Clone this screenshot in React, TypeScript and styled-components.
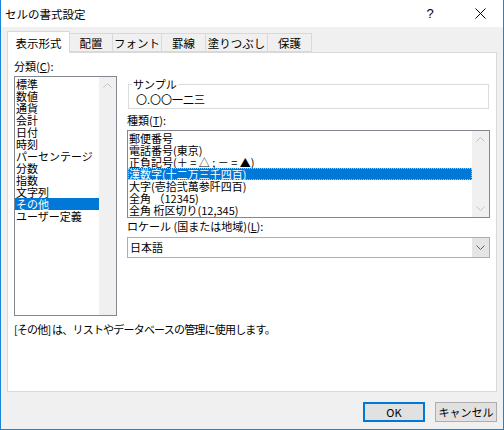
import styled, { createGlobalStyle } from "styled-components";

const GlobalStyle = createGlobalStyle`
  html, body {
    margin: 0;
    padding: 0;
    background: #f0f0f0;
  }
  body {
    font-family: "Noto Sans CJK JP", "Noto Sans", sans-serif;
    font-size: 11px;
    color: #000;
  }
`;

const tabs = ["表示形式", "配置", "フォント", "罫線", "塗りつぶし", "保護"];
const tabWidths = [63, 43, 49, 44, 62, 44];

const categories = [
  "標準",
  "数値",
  "通貨",
  "会計",
  "日付",
  "時刻",
  "パーセンテージ",
  "分数",
  "指数",
  "文字列",
  "その他",
  "ユーザー定義",
];

const types = [
  "郵便番号",
  "電話番号(東京)",
  "正負記号(＋ = △ ; － = ▲)",
  "漢数字(十二万三千四百)",
  "大字(壱拾弐萬参阡四百)",
  "全角 （12345)",
  "全角 桁区切り(12,345)",
];

const Chevron = ({ down, color = "#c2c2c2" }: { down?: boolean; color?: string }) => (
  <svg width="9" height="5" viewBox="0 0 9 5">
    <path
      d={down ? "M0.5 0.5 L4.5 4.5 L8.5 0.5" : "M0.5 4.5 L4.5 0.5 L8.5 4.5"}
      fill="none"
      stroke={color}
      strokeWidth="1"
    />
  </svg>
);

export default function App() {
  return (
    <>
      <GlobalStyle />
      <Window>
        <TitleBar>
          <Title>セルの書式設定</Title>
          <TitleButtons>
            <HelpMark>?</HelpMark>
            <CloseMark>
              <svg width="11" height="11" viewBox="0 0 11 11">
                <path d="M0.5 0.5 L10.5 10.5 M10.5 0.5 L0.5 10.5" stroke="#000" strokeWidth="1" />
              </svg>
            </CloseMark>
          </TitleButtons>
        </TitleBar>

        <Body>
          <TabRow>
            {tabs.map((t, i) => (
              <Tab key={t} $active={i === 0} style={{ width: tabWidths[i] }}>
                {t}
              </Tab>
            ))}
          </TabRow>

          <Panel>
            <Columns>
              <LeftCol>
                <Label>
                  分類(<u>C</u>):
                </Label>
                <CategoryList>
                  <ListItems>
                    {categories.map((c) => (
                      <Item key={c} $selected={c === "その他"}>
                        {c}
                      </Item>
                    ))}
                  </ListItems>
                  <ScrollTrack>
                    <ArrowCell>
                      <Chevron />
                    </ArrowCell>
                  </ScrollTrack>
                </CategoryList>
              </LeftCol>

              <RightCol>
                <SampleGroup>
                  <Legend>サンプル</Legend>
                  <SampleText>〇.〇〇一二三</SampleText>
                </SampleGroup>

                <Label>
                  種類(<u>T</u>):
                </Label>
                <TypeList>
                  <ListItems>
                    {types.map((t, i) => (
                      <Item key={t} $selected={i === 3} $focused={i === 3}>
                        {t}
                      </Item>
                    ))}
                  </ListItems>
                  <ScrollTrack>
                    <ArrowCell>
                      <Chevron />
                    </ArrowCell>
                    <ArrowCell>
                      <Chevron down />
                    </ArrowCell>
                  </ScrollTrack>
                </TypeList>

                <LocaleLabel>
                  ロケール (国または地域)(<u>L</u>):
                </LocaleLabel>
                <Select>
                  <SelectValue>日本語</SelectValue>
                  <SelectButton>
                    <Chevron down color="#606060" />
                  </SelectButton>
                </Select>
              </RightCol>
            </Columns>

            <Description>[その他] は、リストやデータベースの管理に使用します。</Description>
          </Panel>

          <ButtonRow>
            <Button $default>OK</Button>
            <Button>キャンセル</Button>
          </ButtonRow>
        </Body>
      </Window>
    </>
  );
}

const Window = styled.div`
  width: 504px;
  height: 430px;
  box-sizing: border-box;
  border: 1px solid #1883d7;
  border-top: none;
  display: flex;
  flex-direction: column;
  background: #f0f0f0;
`;

const TitleBar = styled.div`
  height: 27px;
  background: #fff;
  display: flex;
  align-items: center;
  justify-content: space-between;
  padding-left: 4px;
`;

const Title = styled.div`
  font-size: 11.5px;
  line-height: 14px;
`;

const TitleButtons = styled.div`
  display: flex;
  align-items: center;
`;

const HelpMark = styled.div`
  width: 46px;
  text-align: center;
  font-family: "Liberation Sans", sans-serif;
  font-size: 13px;
  margin-right: 4px;
`;

const CloseMark = styled.div`
  width: 46px;
  display: flex;
  justify-content: center;
  align-items: center;
`;

const Body = styled.div`
  flex: 1;
  display: flex;
  flex-direction: column;
  padding: 4px 6px 0 6px;
`;

const TabRow = styled.div`
  display: flex;
  align-items: flex-end;
  height: 21px;
  position: relative;
  z-index: 1;
`;

const Tab = styled.div<{ $active?: boolean }>`
  box-sizing: border-box;
  height: ${(p) => (p.$active ? "22px" : "19px")};
  margin-bottom: ${(p) => (p.$active ? "-1px" : "0")};
  border: 1px solid #d9d9d9;
  border-bottom: ${(p) => (p.$active ? "none" : "1px solid #d9d9d9")};
  border-left: ${(p) => (p.$active ? "1px solid #d9d9d9" : "none")};
  background: ${(p) => (p.$active ? "#fff" : "#f0f0f0")};
  display: flex;
  align-items: center;
  justify-content: center;
  font-size: 11.5px;
  white-space: nowrap;
  padding-top: ${(p) => (p.$active ? "0" : "1px")};
`;

const Panel = styled.div`
  box-sizing: border-box;
  height: 340px;
  background: #fff;
  border: 1px solid #d9d9d9;
  padding: 6px 6px 0 6px;
  display: flex;
  flex-direction: column;
`;

const Columns = styled.div`
  display: flex;
  gap: 10px;
  height: 258px;
`;

const LeftCol = styled.div`
  width: 103px;
  display: flex;
  flex-direction: column;
`;

const RightCol = styled.div`
  width: 363px;
  display: flex;
  flex-direction: column;
  padding-top: 25px;
`;

const Label = styled.div`
  font-size: 11px;
  line-height: 14px;
  height: 17px;
  white-space: nowrap;
  u {
    text-decoration: underline;
    text-underline-offset: 1px;
  }
`;

const CategoryList = styled.div`
  box-sizing: border-box;
  height: 240px;
  border: 1px solid #828790;
  display: flex;
`;

const ListItems = styled.div`
  flex: 1;
  padding-top: 1px;
  display: flex;
  flex-direction: column;
`;

const Item = styled.div<{ $selected?: boolean; $focused?: boolean }>`
  box-sizing: border-box;
  height: 12px;
  line-height: 12px;
  font-size: 11px;
  padding-left: 1px;
  white-space: nowrap;
  background: ${(p) => (p.$selected ? "#0078d7" : "transparent")};
  color: ${(p) => (p.$selected ? "#fff" : "#000")};
  outline: ${(p) => (p.$focused ? "1px dotted #a0c8f0" : "none")};
  outline-offset: -1px;
`;

const ScrollTrack = styled.div`
  width: 17px;
  background: #f0f0f0;
  display: flex;
  flex-direction: column;
  justify-content: space-between;
`;

const ArrowCell = styled.div`
  height: 17px;
  display: flex;
  align-items: center;
  justify-content: center;
`;

const SampleGroup = styled.fieldset`
  margin: 0 1px -2px 1px;
  padding: 2px 7px 5px 7px;
  border: 1px solid #dcdcdc;
  height: 31px;
  box-sizing: border-box;
  position: relative;
  top: -6px;
`;

const Legend = styled.legend`
  padding: 0 1px;
  margin-left: -4px;
  font-size: 11px;
  line-height: 12px;
`;

const SampleText = styled.div`
  font-size: 11px;
  line-height: 14px;
`;

const TypeList = styled.div`
  box-sizing: border-box;
  height: 88px;
  border: 1px solid #828790;
  display: flex;
`;

const LocaleLabel = styled(Label)`
  margin-top: 1px;
  height: 18px;
`;

const Select = styled.div`
  box-sizing: border-box;
  height: 21px;
  border: 1px solid #adadad;
  display: flex;
`;

const SelectValue = styled.div`
  flex: 1;
  padding-left: 2px;
  line-height: 19px;
  font-size: 11px;
`;

const SelectButton = styled.div`
  width: 17px;
  background: #e5e5e5;
  display: flex;
  align-items: center;
  justify-content: center;
`;

const Description = styled.div`
  margin-top: 5px;
  font-size: 11px;
  line-height: 14px;
  letter-spacing: -0.8px;
  white-space: nowrap;
`;

const ButtonRow = styled.div`
  display: flex;
  justify-content: flex-end;
  gap: 10px;
  padding-top: 10px;
`;

const Button = styled.button<{ $default?: boolean }>`
  box-sizing: border-box;
  width: 62px;
  height: 20px;
  background: #e1e1e1;
  border: ${(p) => (p.$default ? "2px solid #0078d7" : "1px solid #adadad")};
  font-family: "Noto Sans CJK JP", sans-serif;
  font-size: 11px;
  color: #000;
  padding: 0;
  line-height: 14px;
`;
